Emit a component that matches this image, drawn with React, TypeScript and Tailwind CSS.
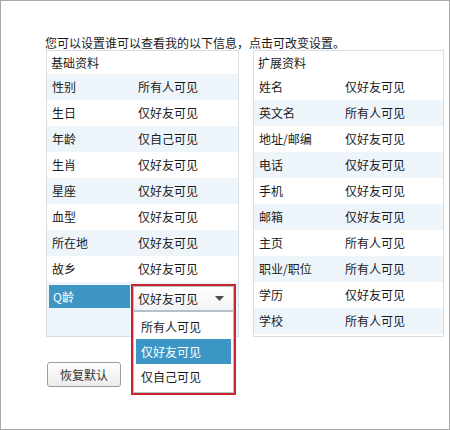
const basic: [string, string][] = [
  ['性别', '所有人可见'],
  ['生日', '仅好友可见'],
  ['年龄', '仅自己可见'],
  ['生肖', '仅好友可见'],
  ['星座', '仅好友可见'],
  ['血型', '仅好友可见'],
  ['所在地', '仅好友可见'],
  ['故乡', '仅好友可见'],
];

const extended: [string, string][] = [
  ['姓名', '仅好友可见'],
  ['英文名', '所有人可见'],
  ['地址/邮编', '仅好友可见'],
  ['电话', '仅好友可见'],
  ['手机', '仅好友可见'],
  ['邮箱', '仅好友可见'],
  ['主页', '所有人可见'],
  ['职业/职位', '所有人可见'],
  ['学历', '仅好友可见'],
  ['学校', '所有人可见'],
];

function Row({ label, value, index }: { label: string; value: string; index: number }) {
  return (
    <div className={`flex h-[26px] items-center ${index % 2 === 0 ? 'bg-[#eef5fa]' : 'bg-white'}`}>
      <span className="w-[91px] pl-[5px]">{label}</span>
      <span>{value}</span>
    </div>
  );
}

function VisibilityDropdown() {
  const options = ['所有人可见', '仅好友可见', '仅自己可见'];
  return (
    <div className="absolute left-[84px] top-[2px] z-10 flex h-[111px] w-[105px] flex-col border-2 border-[#c9252f] bg-white">
      <div className="flex h-[25px] items-center justify-between border border-[#b7c0c8] bg-gradient-to-b from-white to-[#f1f3f5] pl-[4px] pr-[9px]">
        <span>仅好友可见</span>
        <svg width="9" height="5" viewBox="0 0 9 5">
          <path d="M0 0h9L4.5 5z" fill="#4a4a4a" />
        </svg>
      </div>
      <div className="flex flex-1 flex-col border border-[#b7c0c8] p-[2px]">
        {options.map((o) => (
          <div
            key={o}
            className={`flex h-[25px] items-center pl-[5px] ${o === '仅好友可见' ? 'bg-[#3b96c6] text-white' : ''}`}
          >
            {o}
          </div>
        ))}
      </div>
    </div>
  );
}

export default function App() {
  return (
    <div
      className="relative h-[430px] w-[450px] border border-[#a8a8a8] bg-white pl-[44px] pt-[34px] text-[12px] text-[#1a1a1a]"
      style={{ fontFamily: '"Noto Sans CJK SC", "Noto Sans", sans-serif' }}
    >
      <p className="h-[15px] leading-[15px]">您可以设置谁可以查看我的以下信息，点击可改变设置。</p>

      <div className="ml-[1px] flex gap-[14px]">
        {/* 基础资料 */}
        <div className="w-[193px] border border-[#d6dfe6]">
          <div className="flex h-[23px] items-center pl-[4px]">基础资料</div>
          {basic.map(([l, v], i) => (
            <Row key={l} label={l} value={v} index={i} />
          ))}
          <div className="relative h-[54px] bg-[#eef5fa] pt-[3px]">
            <div className="ml-[2px] flex h-[23px] w-[81px] items-center bg-[#3d96c4] pl-[4px] text-white">Q龄</div>
            <VisibilityDropdown />
          </div>
        </div>

        {/* 扩展资料 */}
        <div className="w-[191px] border border-[#d6dfe6]">
          <div className="flex h-[23px] items-center pl-[4px]">扩展资料</div>
          {extended.map(([l, v], i) => (
            <Row key={l} label={l} value={v} index={i + 1} />
          ))}
        </div>
      </div>

      <button className="ml-[2px] mt-[25px] flex h-[25px] w-[74px] items-center justify-center rounded-[3px] border border-[#9c9c9c] bg-gradient-to-b from-white to-[#ececec] text-[#333]">
        恢复默认
      </button>
    </div>
  );
}
